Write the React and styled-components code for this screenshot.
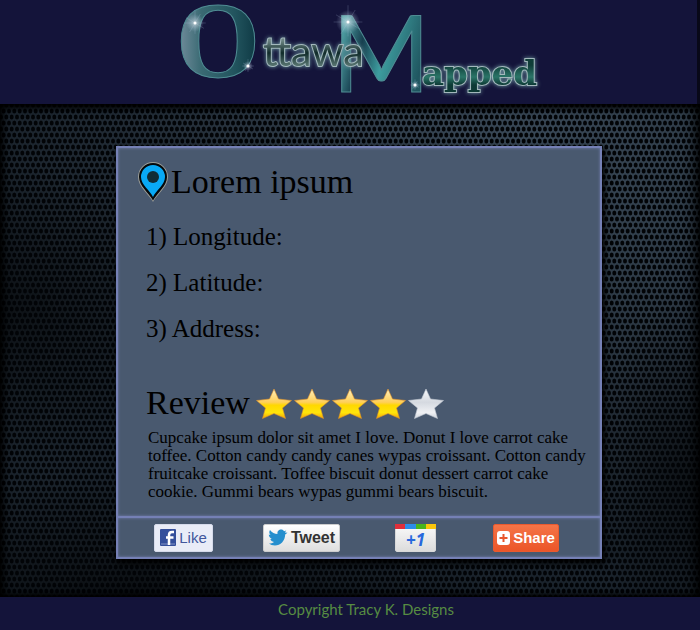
import React from "react";
import styled, { createGlobalStyle, css } from "styled-components";

const mesh = `url("data:image/svg+xml,${encodeURIComponent(
  `<svg xmlns="http://www.w3.org/2000/svg" width="16" height="12"><g fill="#020407">${[
    [2.7, 3], [8, 3], [13.3, 3], [0, 9], [5.3, 9], [10.7, 9], [16, 9],
  ]
    .map(([x, y]) => `<ellipse cx="${x}" cy="${y}" rx="2" ry="2.6"/>`)
    .join("")}</g></svg>`
)}")`;

const GlobalStyle = createGlobalStyle`
  *, *::before, *::after { box-sizing: border-box; }
  body {
    margin: 0;
    background: #14143a;
    color: #000;
    font-family: "Liberation Serif", "Times New Roman", serif;
  }
  h1, h2, p, ol { margin: 0; padding: 0; font-weight: 400; }
`;

const Page = styled.div`
  display: flex;
  flex-direction: column;
  min-height: 100vh;
`;

const Header = styled.header`
  display: flex;
  justify-content: center;
  height: 104px;
  padding-left: 20px;
  border-right: 3px solid #080818;
  background: #14143a;
`;

const LogoTitle = styled.h1`
  line-height: 0;
`;

const LogoArt = styled.svg`
  display: block;
  overflow: visible;
`;

const BigLetter = styled.text`
  font-family: ${(p) => p.$face};
  font-size: ${(p) => p.$size}px;
  font-weight: ${(p) => p.$weight || 400};
  stroke: #4f8c93;
  stroke-width: 1;
`;

const SmallLetters = styled.text`
  font-family: ${(p) => p.$face};
  font-size: ${(p) => p.$size}px;
  font-weight: ${(p) => p.$weight || 400};
  paint-order: stroke;
  stroke: #a3b8bc;
  stroke-width: 2;
  filter: drop-shadow(0 0 2px #6f9aa2);
`;

const Main = styled.main`
  flex: 1;
  padding: 42px 98px 38px 116px;
  box-shadow: inset 0 6px 6px -2px #000, inset 6px 0 8px -3px #000,
    inset -8px 0 14px -4px #000, inset 0 -4px 5px -2px #000;
  background: ${mesh} 1px 4px,
    radial-gradient(ellipse 35% 30% at 0% 42%, rgba(0, 0, 0, 0.5), transparent),
    radial-gradient(ellipse 50% 25% at 20% 100%, rgba(0, 0, 0, 0.6), transparent),
    radial-gradient(ellipse 12% 35% at 97% 75%, rgba(0, 0, 0, 0.5), transparent),
    radial-gradient(ellipse 75% 80% at 75% 12%, #3a4a59, #26313c 60%, #1a232c);
`;

const edge = css`
  border: 2px solid #7580b5;
  box-shadow: inset 0 0 3px #7480b2;
`;

const Card = styled.article`
  background: #49596f;
  box-shadow: 2px 3px 6px 1px #000;
`;

const CardBody = styled.div`
  ${edge}
  border-bottom-width: 0;
  min-height: 370px;
  padding: 12px 12px 14px 28px;
`;

const PlaceHeading = styled.h2`
  display: flex;
  align-items: center;
  gap: 2px;
  height: 44px;
  margin-left: -9px;
  font-size: 34px;
  line-height: 40px;
`;

const Facts = styled.ol`
  display: grid;
  gap: 16px;
  margin-top: 18px;
  list-style: none;
  font-size: 25px;
  line-height: 30px;
`;

const ReviewHeading = styled.div`
  display: flex;
  align-items: center;
  gap: 6px;
  margin-top: 39px;
  h2 {
    font-size: 34px;
    line-height: 40px;
  }
`;

const Stars = styled.div`
  display: flex;
  gap: 2px;
  padding-top: 2px;
`;

const ReviewText = styled.p`
  padding-left: 2px;
  margin-top: 6px;
  font-size: 17px;
  line-height: 18px;
`;

const ShareBar = styled.div`
  ${edge}
  display: grid;
  grid-template-columns: 109fr 132fr 98fr 66fr;
  align-items: center;
  height: 43px;
  padding: 0 41px 0 36px;
`;

const ShareButton = styled.button`
  display: flex;
  align-items: center;
  justify-content: center;
  height: 28px;
  width: ${(p) => p.$width}px;
  padding: 0;
  gap: 3px;
  border: 1px solid ${(p) => p.$line};
  border-radius: 2px;
  background: ${(p) => p.$fill};
  color: ${(p) => p.$ink};
  font: ${(p) => p.$font};
  white-space: nowrap;
  cursor: pointer;
`;

const PlusButton = styled(ShareButton)`
  position: relative;
  padding-top: 5px;
  &::before {
    content: "";
    position: absolute;
    inset: -1px -1px auto;
    height: 5px;
    background: linear-gradient(90deg, #df2f3b 25%, #2c8ce8 25% 50%, #49b51b 50% 75%, #fbc60b 75%);
  }
`;

const Footer = styled.footer`
  height: 33px;
  padding: 2px 0 0 32px;
  background: #14143a;
  color: #578c42;
  font: 15px/20px Lato, sans-serif;
  text-align: center;
`;

const Sparkle = ({ x, y, r }) => (
  <g transform={`translate(${x} ${y})`}>
    <circle r={r} fill="url(#glow)" />
    <path
      d={`M${-r} ${-r * 0.6}L${r} ${r * 0.6}M${-r * 0.6} ${r}L${r * 0.6} ${-r}M0 ${-r * 1.4}V${r * 1.2}M${-r * 1.2} 0H${r * 1.2}`}
      stroke="#b9c9e4" strokeOpacity="0.2" strokeWidth="1"
    />
    <circle r="1.5" fill="#fff" />
  </g>
);

function Logo() {
  return (
    <LogoTitle>
      <LogoArt width="372" height="104" viewBox="0 0 372 104" role="img" aria-label="Ottawa Mapped">
        <defs>
          <linearGradient id="oFill" x1="0" y1="0" x2="1" y2="0">
            <stop offset="0" stopColor="#7890a0" />
            <stop offset="0.3" stopColor="#3a6a73" />
            <stop offset="0.7" stopColor="#22545e" />
            <stop offset="1" stopColor="#0b3540" />
          </linearGradient>
          <linearGradient id="mFill" x1="0" y1="0" x2="1" y2="0.3">
            <stop offset="0" stopColor="#79c1c1" />
            <stop offset="0.2" stopColor="#4c9ca0" />
            <stop offset="0.4" stopColor="#173f4f" />
            <stop offset="0.62" stopColor="#3d9d9f" />
            <stop offset="1" stopColor="#205660" />
          </linearGradient>
          <linearGradient id="metal" x1="0" y1="0" x2="0" y2="1">
            <stop offset="0.3" stopColor="#6c8583" />
            <stop offset="0.55" stopColor="#102b2a" />
            <stop offset="0.8" stopColor="#55726e" />
          </linearGradient>
          <linearGradient id="green" x1="0" y1="0" x2="0" y2="1">
            <stop offset="0.3" stopColor="#0f3d38" />
            <stop offset="0.6" stopColor="#2b7568" />
            <stop offset="0.8" stopColor="#0d3a35" />
          </linearGradient>
          <radialGradient id="glow">
            <stop offset="0" stopColor="#fff" stopOpacity="0.6" />
            <stop offset="1" stopColor="#b7cfe8" stopOpacity="0" />
          </radialGradient>
        </defs>
        <BigLetter x="3" y="77" $size="108" $weight="700" $face='"Liberation Serif", serif' fill="url(#oFill)">O</BigLetter>
        <BigLetter x="159" y="92" $size="106" $face="Lato, sans-serif" fill="url(#mFill)">M</BigLetter>
        <SmallLetters x="90" y="66" $size="41" $face="Lato, sans-serif" fill="url(#metal)">ttawa</SmallLetters>
        <SmallLetters x="249" y="85" $size="34" $weight="700" $face='"DejaVu Serif", serif' fill="url(#green)">apped</SmallLetters>
        <Sparkle x={22} y={23} r={9} />
        <Sparkle x={75} y={66} r={5} />
        <Sparkle x={175} y={22} r={12} />
        <Sparkle x={242} y={85} r={4} />
      </LogoArt>
    </LogoTitle>
  );
}

const Pin = () => (
  <svg width="32" height="42" viewBox="0 0 32 42" aria-hidden="true">
    <path d="M16 41C12 33 1 26 1 16a15 15 0 0 1 30 0c0 10-11 17-15 25z" fill="#9b9d97" />
    <path d="M16 39.500C12 32 2 25 2 16a14 14 0 0 1 28 0c0 9-10 16-14 23.500z" fill="#05090b" />
    <path d="M16 36C13 29.500 4 23.500 4 16a12 12 0 0 1 24 0c0 7.500-9 13.500-12 20z" fill="#09a9f5" />
    <circle cx="16" cy="16" r="6" fill="#102c35" />
  </svg>
);

const Star = ({ lit }) => (
  <svg width="36" height="32" viewBox="0 0 36 32" aria-hidden="true">
    <defs>
      <linearGradient id={lit ? "gold" : "silver"} x1="0" y1="0" x2="0" y2="1">
        <stop offset="0" stopColor={lit ? "#fff0bd" : "#f8f9fb"} />
        <stop offset="0.45" stopColor={lit ? "#ffcf58" : "#d5d9e0"} />
        <stop offset="0.55" stopColor={lit ? "#ffd800" : "#dce0e6"} />
        <stop offset="0.8" stopColor={lit ? "#ffe50b" : "#f0f1f4"} />
        <stop offset="1" stopColor={lit ? "#f5a500" : "#cfd4dc"} />
      </linearGradient>
    </defs>
    <path
      d="M18 1L22.500 11L35.500 12.500L26.500 20L29.500 30.500L18 25.500L6.500 30.500L9.500 20L.5 12.500L13.500 11Z"
      fill={`url(#${lit ? "gold" : "silver"})`}
      stroke={lit ? "#dc912c" : "#c0c6d0"} strokeWidth="0.6" strokeLinejoin="round"
    />
  </svg>
);

const Facebook = () => (
  <svg width="16" height="17" viewBox="0 0 16 17" aria-hidden="true">
    <rect width="16" height="17" rx="1" fill="#344f9b" />
    <path d="M1 15h14" stroke="#8394c7" />
    <path d="M9 16V6q0-3 3-3h2M6 8.500h7.500" fill="none" stroke="#fff" strokeWidth="2.500" />
  </svg>
);

const Bird = () => (
  <svg width="20" height="17" viewBox="0 0 20 17" aria-hidden="true">
    <path
      d="M2 1c2 2.500 4.500 4 7.500 4C9 2 11 .5 13 .5c1.500 0 2.500.7 3 1.700l2.300-.7-1.500 2 2.700.2-2.300 1.800C17 12 12.500 16.500 7 16.500c-2.700 0-4.500-.8-6-2 2 0 3.700-.4 5-1.600-2-.2-3.200-1.300-3.700-2.900h1.500C1.800 9 .8 7.500.8 5.600l1.700.5C1 4.500 1 2.700 2 1z"
      fill="#258fce"
    />
  </svg>
);

const PlusBadge = () => (
  <svg width="13" height="14" viewBox="0 0 13 14" aria-hidden="true">
    <rect width="13" height="14" rx="3" fill="#fff" />
    <path d="M6.500 3v8M2.500 7h8" stroke="#e8562d" strokeWidth="2" />
  </svg>
);

const facts = ["1) Longitude:", "2) Latitude:", "3) Address:"];

export default function App() {
  return (
    <Page>
      <GlobalStyle />
      <Header>
        <Logo />
      </Header>
      <Main>
        <Card>
          <CardBody>
            <PlaceHeading>
              <Pin />
              Lorem ipsum
            </PlaceHeading>
            <Facts>
              {facts.map((fact) => (
                <li key={fact}>{fact}</li>
              ))}
            </Facts>
            <ReviewHeading>
              <h2>Review</h2>
              <Stars role="img" aria-label="4 out of 5 stars">
                {[1, 2, 3, 4, 5].map((n) => (
                  <Star key={n} lit={n <= 4} />
                ))}
              </Stars>
            </ReviewHeading>
            <ReviewText>
              Cupcake ipsum dolor sit amet I love. Donut I love carrot cake toffee. Cotton candy
              candy canes wypas croissant. Cotton candy fruitcake croissant. Toffee biscuit donut
              dessert carrot cake cookie. Gummi bears wypas gummi bears biscuit.
            </ReviewText>
          </CardBody>
          <ShareBar>
            <ShareButton $width={59} $fill="#e9ecf7" $line="#d5daea" $ink="#42579c" $font='15px/18px "Liberation Sans", sans-serif'>
              <Facebook />
              Like
            </ShareButton>
            <ShareButton $width={77} $fill="linear-gradient(#fff, #dedede)" $line="#ccc" $ink="#333" $font='bold 16px/18px "Liberation Sans", sans-serif'>
              <Bird />
              Tweet
            </ShareButton>
            <PlusButton $width={41} $fill="linear-gradient(#fafafa, #dcdcdc)" $line="#d8d8d8" $ink="#2868dd" $font='italic bold 17px/20px "Open Sans", sans-serif'>
              +1
            </PlusButton>
            <ShareButton $width={66} $fill="linear-gradient(#f47447, #ec5528)" $line="#e85a2f" $ink="#fff" $font='bold 15px/18px "Liberation Sans", sans-serif'>
              <PlusBadge />
              Share
            </ShareButton>
          </ShareBar>
        </Card>
      </Main>
      <Footer>Copyright Tracy K. Designs</Footer>
    </Page>
  );
}
